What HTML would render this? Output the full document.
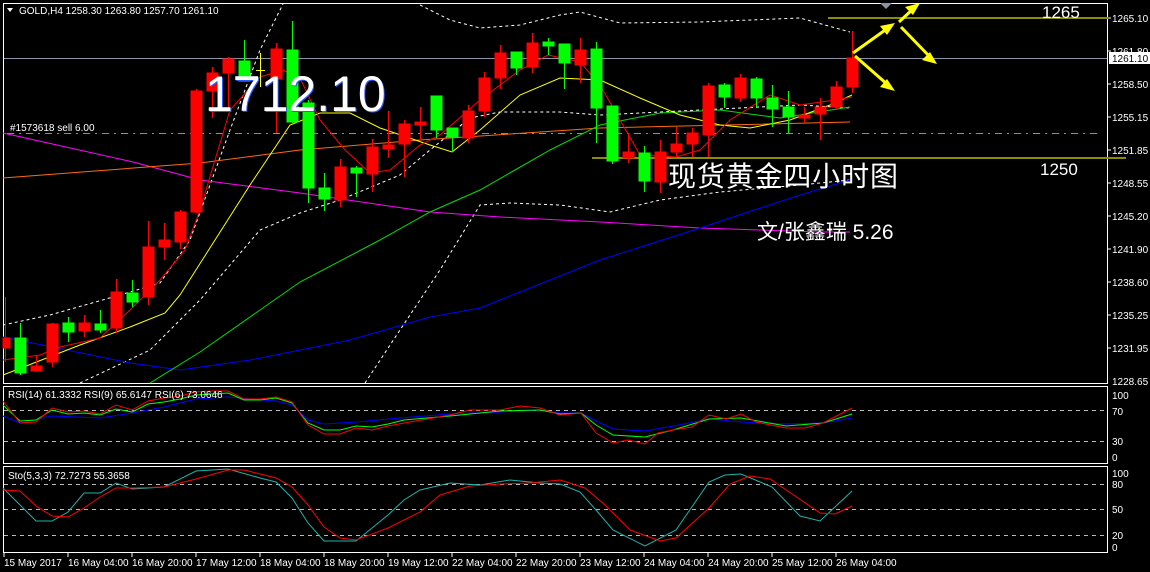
<!DOCTYPE html>
<html><head><meta charset="utf-8"><style>
html,body{margin:0;padding:0;background:#000;width:1150px;height:572px;overflow:hidden}
svg{display:block}
text{font-family:"Liberation Sans","Noto Sans CJK SC",sans-serif}
</style></head><body>
<svg width="1150" height="572" viewBox="0 0 1150 572" xmlns="http://www.w3.org/2000/svg">
<rect width="1150" height="572" fill="#000"/>
<g fill="none" stroke="#fff" stroke-width="1">
<rect x="3.5" y="3.5" width="1104" height="380"/>
<rect x="3.5" y="386.5" width="1104" height="77"/>
<rect x="3.5" y="466.5" width="1104" height="86"/>
</g>
<line x1="4" y1="58.5" x2="1107" y2="58.5" stroke="#8a94a8" stroke-width="1"/>
<line x1="7" y1="133.5" x2="1102" y2="133.5" stroke="#33cc33" stroke-width="1" stroke-dasharray="7,5,2,5"/>
<line x1="828" y1="18" x2="1108" y2="18" stroke="#8c8c00" stroke-width="2"/>
<line x1="592" y1="158" x2="1126" y2="158" stroke="#8c8c00" stroke-width="2"/>
<text x="1042" y="18" fill="#fff" font-size="17">1265</text>
<text x="1040" y="175" fill="#fff" font-size="17">1250</text>
<g fill="none" stroke="#fff" stroke-width="1" stroke-dasharray="3,3">
<polyline points="3,325 50,315 120,295 160,283 190,240 230,130 260,50 283,4"/>
<polyline points="420,5 450,20 480,28 520,25 560,15 580,12 620,23 700,22 800,18 850,32"/>
<polyline points="80,383 150,350 200,300 260,230 300,213 340,200 400,175 430,150 470,118 500,112 560,112 600,115 700,110 800,105 850,108"/>
<polyline points="365,383 400,330 440,270 480,205 510,203 560,205 610,212 660,200 720,192 800,185 850,180"/>
</g>
<g fill="none" stroke-width="1">
<polyline stroke="#ff00ff" points="3,133 133,162 200,180 300,193 430,212 500,217 600,222 700,228 820,232 850,232"/>
<polyline stroke="#ff6a10" points="3,178 200,163 300,150 420,140 600,128 850,122"/>
<polyline stroke="#0000ff" points="3,337 130,363 180,370 250,360 350,340 430,317 480,308 600,260 700,228 800,195 850,180"/>
<polyline stroke="#00dd00" points="150,383 200,352 300,282 380,240 430,212 480,190 550,150 600,125 660,113 720,110 780,118 850,107"/>
<polyline stroke="#ffff00" points="3,375 80,345 130,327 165,313 180,295 250,185 290,125 320,113 350,113 380,128 430,145 452,152 480,130 520,95 560,78 600,80 640,98 680,115 720,125 750,128 790,120 830,105 852,95"/>
<polyline stroke="#ff0000" points="3,360 40,355 60,347 100,338 130,310 160,280 185,250 200,210 230,110 260,77 283,70 300,78 320,120 345,150 370,173 390,170 420,145 440,135 480,100 520,70 548,55 580,62 600,85 640,155 676,157 700,150 730,120 770,95 800,105 835,100 852,97"/>
</g>
<g stroke-width="1">
<g stroke="#ff0000" fill="#ff0000">
<line x1="5.5" y1="297" x2="5.5" y2="362"/><rect x="3" y="338" width="7" height="10"/>
<line x1="36.5" y1="355" x2="36.5" y2="372"/><rect x="31" y="366" width="11" height="5"/>
<line x1="52.5" y1="323" x2="52.5" y2="367"/><rect x="47" y="324" width="11" height="38"/>
<line x1="84.5" y1="315" x2="84.5" y2="337"/><rect x="79" y="323" width="11" height="8"/>
<line x1="116.5" y1="279" x2="116.5" y2="333"/><rect x="111" y="292" width="11" height="36"/>
<line x1="148.5" y1="221" x2="148.5" y2="305"/><rect x="143" y="247" width="11" height="50"/>
<line x1="164.5" y1="223" x2="164.5" y2="260"/><rect x="159" y="240" width="11" height="7"/>
<line x1="180.5" y1="210" x2="180.5" y2="249"/><rect x="175" y="212" width="11" height="30"/>
<line x1="196.5" y1="89" x2="196.5" y2="213"/><rect x="191" y="91" width="11" height="121"/>
<line x1="212.5" y1="67" x2="212.5" y2="118"/><rect x="207" y="73" width="11" height="18"/>
<line x1="228.5" y1="57" x2="228.5" y2="110"/><rect x="223" y="59" width="11" height="14"/>
<line x1="276.5" y1="43" x2="276.5" y2="133"/><rect x="271" y="49" width="11" height="30"/>
<line x1="340.5" y1="159" x2="340.5" y2="207"/><rect x="335" y="167" width="11" height="33"/>
<line x1="372.5" y1="139" x2="372.5" y2="192"/><rect x="367" y="147" width="11" height="27"/>
<line x1="388.5" y1="111" x2="388.5" y2="158"/><rect x="383" y="145" width="11" height="4"/>
<line x1="404.5" y1="120" x2="404.5" y2="177"/><rect x="399" y="124" width="11" height="20"/>
<line x1="420.5" y1="107" x2="420.5" y2="140"/><rect x="415" y="122" width="11" height="3"/>
<line x1="468.5" y1="105" x2="468.5" y2="143"/><rect x="463" y="111" width="11" height="27"/>
<line x1="484.5" y1="72" x2="484.5" y2="117"/><rect x="479" y="78" width="11" height="33"/>
<line x1="500.5" y1="45" x2="500.5" y2="89"/><rect x="495" y="53" width="11" height="25"/>
<line x1="532.5" y1="33" x2="532.5" y2="73"/><rect x="527" y="43" width="11" height="24"/>
<line x1="580.5" y1="38" x2="580.5" y2="83"/><rect x="575" y="50" width="11" height="15"/>
<line x1="628.5" y1="133" x2="628.5" y2="163"/><rect x="623" y="152" width="11" height="6"/>
<line x1="660.5" y1="140" x2="660.5" y2="193"/><rect x="655" y="152" width="11" height="30"/>
<line x1="676.5" y1="127" x2="676.5" y2="157"/><rect x="671" y="144" width="11" height="8"/>
<line x1="692.5" y1="128" x2="692.5" y2="157"/><rect x="687" y="133" width="11" height="11"/>
<line x1="708.5" y1="83" x2="708.5" y2="157"/><rect x="703" y="86" width="11" height="49"/>
<line x1="740.5" y1="74" x2="740.5" y2="102"/><rect x="735" y="78" width="11" height="20"/>
<line x1="804.5" y1="107" x2="804.5" y2="123"/><rect x="799" y="115" width="11" height="3"/>
<line x1="820.5" y1="98" x2="820.5" y2="140"/><rect x="815" y="107" width="11" height="7"/>
<line x1="836.5" y1="81" x2="836.5" y2="110"/><rect x="831" y="87" width="11" height="20"/>
<line x1="852.5" y1="31" x2="852.5" y2="93"/><rect x="847" y="58" width="11" height="29"/>
</g>
<g stroke="#00ff00" fill="#00ff00">
<line x1="20.5" y1="323" x2="20.5" y2="375"/><rect x="15" y="338" width="11" height="35"/>
<line x1="68.5" y1="317" x2="68.5" y2="342"/><rect x="63" y="323" width="11" height="9"/>
<line x1="100.5" y1="310" x2="100.5" y2="333"/><rect x="95" y="324" width="11" height="6"/>
<line x1="132.5" y1="280" x2="132.5" y2="307"/><rect x="127" y="293" width="11" height="9"/>
<line x1="244.5" y1="40" x2="244.5" y2="81"/><rect x="239" y="61" width="11" height="20"/>
<line x1="292.5" y1="21" x2="292.5" y2="123"/><rect x="287" y="50" width="11" height="72"/>
<line x1="308.5" y1="100" x2="308.5" y2="203"/><rect x="303" y="103" width="11" height="85"/>
<line x1="324.5" y1="173" x2="324.5" y2="211"/><rect x="319" y="188" width="11" height="11"/>
<line x1="356.5" y1="166" x2="356.5" y2="197"/><rect x="351" y="168" width="11" height="5"/>
<line x1="436.5" y1="96" x2="436.5" y2="138"/><rect x="431" y="96" width="11" height="34"/>
<line x1="452.5" y1="128" x2="452.5" y2="152"/><rect x="447" y="128" width="11" height="9"/>
<line x1="516.5" y1="52" x2="516.5" y2="75"/><rect x="511" y="52" width="11" height="16"/>
<line x1="548.5" y1="38" x2="548.5" y2="55"/><rect x="543" y="42" width="11" height="4"/>
<line x1="564.5" y1="44" x2="564.5" y2="89"/><rect x="559" y="44" width="11" height="19"/>
<line x1="596.5" y1="42" x2="596.5" y2="143"/><rect x="591" y="49" width="11" height="59"/>
<line x1="612.5" y1="106" x2="612.5" y2="164"/><rect x="607" y="106" width="11" height="55"/>
<line x1="644.5" y1="146" x2="644.5" y2="192"/><rect x="639" y="153" width="11" height="28"/>
<line x1="724.5" y1="83" x2="724.5" y2="108"/><rect x="719" y="85" width="11" height="12"/>
<line x1="756.5" y1="77" x2="756.5" y2="107"/><rect x="751" y="79" width="11" height="19"/>
<line x1="772.5" y1="85" x2="772.5" y2="127"/><rect x="767" y="98" width="11" height="11"/>
<line x1="788.5" y1="91" x2="788.5" y2="133"/><rect x="783" y="107" width="11" height="10"/>
</g>
<line x1="260.5" y1="53" x2="260.5" y2="87" stroke="#ffff00"/>
<line x1="256" y1="70.5" x2="265" y2="70.5" stroke="#ffff00"/>
</g>
<g stroke="#ffff00" stroke-width="3" fill="#ffff00">
<line x1="853" y1="53" x2="888" y2="28"/><polygon points="895,23 880,26 887,35" stroke="none"/>
<line x1="855" y1="56" x2="888" y2="85"/><polygon points="895,91 880,87 887,79" stroke="none"/>
<line x1="899" y1="22" x2="914" y2="8"/><polygon points="920,3 905,7 913,15" stroke="none"/>
<line x1="901" y1="27" x2="931" y2="58"/><polygon points="937,64 922,60 930,52" stroke="none"/>
</g>
<polygon points="880,3 892,3 886,9" fill="#8a94a8"/>
<polygon points="7,8 13,8 10,12" fill="#fff"/>
<text x="19" y="14" fill="#fff" font-size="10">GOLD,H4  1258.30 1263.80 1257.70 1261.10</text>
<text x="10" y="131" fill="#fff" font-size="10">#1573618 sell 6.00</text>
<text x="206" y="112" fill="#2a5cff" font-size="50">1712.10</text>
<text x="205" y="111" fill="#fff" font-size="50">1712.10</text>
<text x="668" y="186" fill="#fff" font-size="28" textLength="230">现货黄金四小时图</text>
<text x="757" y="239" fill="#fff" font-size="21">文/张鑫瑞 5.26</text>
<g fill="#fff" font-size="10">
<text x="1112" y="22">1265.10</text>
<text x="1112" y="55">1261.80</text>
<text x="1112" y="88">1258.50</text>
<text x="1112" y="121">1255.15</text>
<text x="1112" y="154">1251.85</text>
<text x="1112" y="187">1248.55</text>
<text x="1112" y="220">1245.20</text>
<text x="1112" y="253">1241.90</text>
<text x="1112" y="286">1238.60</text>
<text x="1112" y="319">1235.25</text>
<text x="1112" y="352">1231.95</text>
<text x="1112" y="385">1228.65</text>
<text x="1112" y="399">100</text>
<text x="1112" y="415">70</text>
<text x="1112" y="445">30</text>
<text x="1112" y="461">0</text>
<text x="1112" y="477">100</text>
<text x="1112" y="488">80</text>
<text x="1112" y="513">50</text>
<text x="1112" y="539">20</text>
<text x="1112" y="551">0</text>
</g>
<rect x="1109" y="52" width="41" height="12" fill="#fff"/>
<text x="1112" y="62" fill="#000" font-size="10">1261.10</text>
<g stroke="#fff"><line x1="1108" y1="18" x2="1111" y2="18"/><line x1="1108" y1="51" x2="1111" y2="51"/><line x1="1108" y1="84" x2="1111" y2="84"/><line x1="1108" y1="117" x2="1111" y2="117"/><line x1="1108" y1="150" x2="1111" y2="150"/><line x1="1108" y1="183" x2="1111" y2="183"/><line x1="1108" y1="216" x2="1111" y2="216"/><line x1="1108" y1="249" x2="1111" y2="249"/><line x1="1108" y1="282" x2="1111" y2="282"/><line x1="1108" y1="315" x2="1111" y2="315"/><line x1="1108" y1="348" x2="1111" y2="348"/></g>
<g stroke="#bbb" stroke-dasharray="4,4" stroke-width="1">
<line x1="4" y1="410.5" x2="1107" y2="410.5"/><line x1="4" y1="441.5" x2="1107" y2="441.5"/>
<line x1="4" y1="484.5" x2="1107" y2="484.5"/><line x1="4" y1="509.5" x2="1107" y2="509.5"/><line x1="4" y1="535.5" x2="1107" y2="535.5"/>
</g>
<g fill="none" stroke-width="1">
<polyline stroke="#0000ff" points="3,416 20,423 52,416 100,418 132,413 164,407 196,399 228,397 260,400 276,401 292,405 308,420 324,424 356,422 400,418 450,414 500,412 540,410 560,413 581,413 596,421 613,429 645,431 673,426 709,419 741,422 786,424 823,423 852,418"/>
<polyline stroke="#00ff00" points="3,405 20,421 36,420 52,410 68,414 84,413 100,415 116,409 132,412 148,404 164,402 180,399 196,395 212,394 228,393 244,400 260,400 276,398 292,403 308,423 324,430 340,430 356,426 372,427 388,424 404,420 450,416 500,411 540,410 560,414 581,413 596,425 613,435 645,437 673,430 709,419 741,418 786,426 823,423 852,414"/>
<polyline stroke="#ff0000" points="3,401 20,423 36,422 52,408 68,412 84,411 100,414 116,405 132,410 148,401 164,398 180,396 196,392 212,391 228,391 244,399 260,399 276,397 292,402 308,425 324,434 340,434 356,428 372,430 388,426 404,423 450,415 470,410 500,410 520,406 540,408 560,415 581,413 596,433 613,443 628,440 645,444 658,433 673,430 692,427 709,415 726,419 741,414 756,422 786,428 805,428 823,423 852,408"/>
</g>
<text x="8" y="398" fill="#fff" font-size="10">RSI(14) 61.3332  RSI(9) 65.6147  RSI(6) 73.0646</text>
<g fill="none" stroke-width="1">
<polyline stroke="#20b2aa" points="3,488 36,521 52,521 68,512 84,493 100,493 116,483 132,489 164,487 196,471 228,469 260,478 276,482 292,498 308,523 324,541 356,541 388,515 404,500 420,490 450,483 480,485 510,480 540,483 560,484 580,492 596,510 613,530 645,546 676,530 709,482 725,475 741,474 772,487 800,516 820,521 852,491"/>
<polyline stroke="#ff0000" points="3,490 20,491 36,506 52,516 68,517 84,508 100,497 116,488 132,488 164,487 196,479 228,470 244,470 276,478 292,487 308,505 324,527 340,538 356,540 388,528 420,512 440,495 470,486 500,484 530,483 560,480 585,488 605,505 630,530 660,541 676,538 709,508 730,484 750,476 770,479 795,496 820,513 835,514 852,506"/>
</g>
<text x="8" y="479" fill="#fff" font-size="10">Sto(5,3,3) 72.7273 55.3658</text>
<g stroke="#fff"><line x1="4" y1="553" x2="4" y2="557"/><line x1="68" y1="553" x2="68" y2="557"/><line x1="132" y1="553" x2="132" y2="557"/><line x1="196" y1="553" x2="196" y2="557"/><line x1="260" y1="553" x2="260" y2="557"/><line x1="324" y1="553" x2="324" y2="557"/><line x1="388" y1="553" x2="388" y2="557"/><line x1="452" y1="553" x2="452" y2="557"/><line x1="516" y1="553" x2="516" y2="557"/><line x1="580" y1="553" x2="580" y2="557"/><line x1="644" y1="553" x2="644" y2="557"/><line x1="708" y1="553" x2="708" y2="557"/><line x1="772" y1="553" x2="772" y2="557"/><line x1="836" y1="553" x2="836" y2="557"/></g>
<g fill="#fff" font-size="10">
<text x="4" y="566">15 May 2017</text>
<text x="68" y="566">16 May 04:00</text>
<text x="132" y="566">16 May 20:00</text>
<text x="196" y="566">17 May 12:00</text>
<text x="260" y="566">18 May 04:00</text>
<text x="324" y="566">18 May 20:00</text>
<text x="388" y="566">19 May 12:00</text>
<text x="452" y="566">22 May 04:00</text>
<text x="516" y="566">22 May 20:00</text>
<text x="580" y="566">23 May 12:00</text>
<text x="644" y="566">24 May 04:00</text>
<text x="708" y="566">24 May 20:00</text>
<text x="772" y="566">25 May 12:00</text>
<text x="836" y="566">26 May 04:00</text>
</g>
</svg>
</body></html>
